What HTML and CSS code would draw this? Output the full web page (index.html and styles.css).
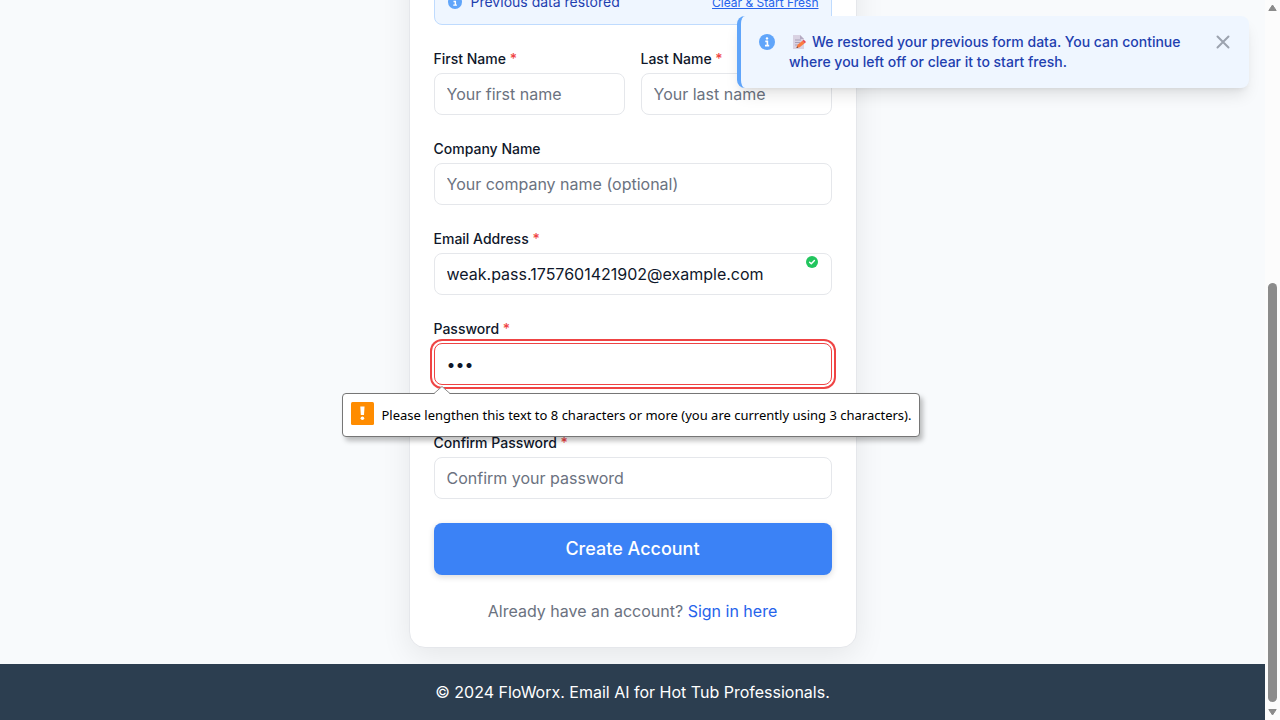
FILE: index.html
```html
<!DOCTYPE html>
<html lang="en">
<head>
<meta charset="utf-8">
<meta name="viewport" content="width=device-width, initial-scale=1">
<title>FloWorx - Create Account</title>
<link rel="stylesheet" href="styles.css">
</head>
<body>
<div class="window">
  <div class="page">
    <main class="main">
      <section class="card">
        <div class="banner">
          <svg class="banner-icon" viewBox="0 0 16 16" aria-hidden="true"><circle cx="8" cy="8" r="8" fill="#60a5fa"/><circle cx="8" cy="4.4" r="1.2" fill="#fff"/><path d="M6.3 7.4H8.4V11.4M6 11.6H10.2" fill="none" stroke="#fff" stroke-width="1.6"/></svg>
          <span class="banner-text">Previous data restored</span>
          <button type="button" class="banner-clear">Clear &amp; Start Fresh</button>
        </div>
        <form class="form" novalidate>
          <div class="name-row">
            <div class="field">
              <label class="label" for="first">First Name <span class="required">*</span></label>
              <input class="input" id="first" type="text" placeholder="Your first name">
            </div>
            <div class="field">
              <label class="label" for="last">Last Name <span class="required">*</span></label>
              <input class="input" id="last" type="text" placeholder="Your last name">
            </div>
          </div>
          <div class="field">
            <label class="label" for="company">Company Name</label>
            <input class="input" id="company" type="text" placeholder="Your company name (optional)">
          </div>
          <div class="field">
            <label class="label" for="email">Email Address <span class="required">*</span></label>
            <div class="control">
              <input class="input" id="email" type="email" value="weak.pass.1757601421902@example.com">
              <svg class="valid-icon" viewBox="0 0 20 20" aria-hidden="true"><circle cx="10" cy="10" r="10" fill="#22c55e"/><path d="M6 10.3L8.8 13L14 7.5" fill="none" stroke="#fff" stroke-width="2.4" stroke-linecap="round" stroke-linejoin="round"/></svg>
            </div>
          </div>
          <div class="field">
            <label class="label" for="password">Password <span class="required">*</span></label>
            <div class="control">
              <input class="input input-invalid" id="password" type="password" value="abc" minlength="8" aria-describedby="password-tip">
              <div class="tip" id="password-tip" role="alert">
                <svg class="tip-arrow" viewBox="0 0 16 8" aria-hidden="true"><path d="M0 8L8 0L16 8Z" fill="#fff"/><path d="M0 7.5L8 .5L16 7.5" fill="none" stroke="#8a8a8a"/></svg>
                <svg class="tip-icon" viewBox="0 0 23 23" aria-hidden="true"><rect width="23" height="23" rx="1.5" fill="#ff8c00"/><path d="M9.3 4.5H13.5L13 13H9.8Z" fill="#fff"/><circle cx="11.4" cy="16.3" r="1.8" fill="#fff"/></svg>
                <span>Please lengthen this text to 8 characters or more (you are currently using 3 characters).</span>
              </div>
            </div>
            <div class="field-note"></div>
          </div>
          <div class="field">
            <label class="label" for="confirm">Confirm Password <span class="required">*</span></label>
            <input class="input" id="confirm" type="password" placeholder="Confirm your password">
          </div>
          <button class="submit" type="submit">Create Account</button>
        </form>
        <p class="signin">Already have an account? <a class="signin-link" href="#">Sign in here</a></p>
      </section>
    </main>
    <footer class="footer">© 2024 FloWorx. Email AI for Hot Tub Professionals.</footer>
    <div class="toast" role="status">
      <svg class="toast-icon" viewBox="0 0 16 16" aria-hidden="true"><circle cx="8" cy="8" r="8" fill="#60a5fa"/><circle cx="8" cy="4.4" r="1.2" fill="#fff"/><path d="M6.3 7.4H8.4V11.4M6 11.6H10.2" fill="none" stroke="#fff" stroke-width="1.6"/></svg>
      <p class="toast-text"><svg class="memo" viewBox="0 0 14 14" aria-hidden="true"><path d="M1 0H8L12 4V14H1Z" fill="#d9d2e2"/><path d="M8 0L12 4H8Z" fill="#b4a9c1"/><path d="M3 5H9M3 7.5H8M3 10H6" stroke="#aaa0b8" stroke-width="1"/><path d="M4.5 13L5.5 9.8L10.5 5.8L12.7 8.2L7.7 12.2Z" fill="#fb7b3e"/><path d="M10.5 5.8L11.8 4.8L14 7.1L12.7 8.2Z" fill="#e8434f"/><path d="M4.5 13L5 11.3L6.3 12.5Z" fill="#5a3b35"/></svg>We restored your previous form data. You can continue where you left off or clear it to start fresh.</p>
      <button type="button" class="toast-close" aria-label="Close"><svg class="close-icon" viewBox="0 0 14 14" aria-hidden="true"><path d="M1.5 1.5L12.5 12.5M12.5 1.5L1.5 12.5" stroke="#9ca3af" stroke-width="2" stroke-linecap="round"/></svg></button>
    </div>
  </div>
  <div class="scrollbar" aria-hidden="true">
    <svg class="scroll-arrow" viewBox="0 0 9 8"><path d="M4.5 1L8.2 6.5H.8Z" fill="#8b8b8b" stroke="#8b8b8b" stroke-linejoin="round"/></svg>
    <div class="scroll-track"><div class="scroll-thumb"></div></div>
    <svg class="scroll-arrow" viewBox="0 0 9 8"><path d="M4.5 7L8.2 1.5H.8Z" fill="#8b8b8b" stroke="#8b8b8b" stroke-linejoin="round"/></svg>
  </div>
</div>
</body>
</html>
```
FILE: styles.css
```css
* { box-sizing: border-box; }

body {
  margin: 0;
  font-family: Inter, "Liberation Sans", sans-serif;
  font-size: 16px;
  line-height: 24px;
  color: #0f172a;
}

button, input { font: inherit; }
button { border: 0; padding: 0; background: none; cursor: pointer; }
svg { display: block; flex-shrink: 0; }

.window { display: flex; height: 100vh; overflow: hidden; }

/* The view rests at the end of the page, so content runs off the top. */
.page {
  position: relative;
  flex: 1;
  min-width: 0;
  display: flex;
  flex-direction: column;
  justify-content: flex-end;
  overflow: hidden;
  background: #f8fafc;
}

.main {
  flex-shrink: 0;
  display: flex;
  justify-content: center;
  padding: 16px;
}

.card {
  width: 100%;
  max-width: 448px;
  padding: 24px;
  border: 1px solid #e5e7eb;
  border-radius: 16px;
  background: #fff;
  box-shadow: 0 8px 30px rgba(0, 0, 0, 0.08);
}

.banner {
  display: flex;
  align-items: baseline;
  gap: 8px;
  margin-bottom: 24px;
  padding: 12px;
  border: 1px solid #bfdbfe;
  border-radius: 8px;
  background: #eff6ff;
  font-size: 14px;
  line-height: 20px;
  color: #1e40af;
}

.banner-icon { align-self: center; width: 16px; height: 14px; }
.banner-text { flex: 1; }
.banner-clear {
  font-size: 12px;
  line-height: 16px;
  color: #2563eb;
  text-decoration: underline;
}

.form { display: flex; flex-direction: column; gap: 24px; }
.name-row { display: grid; grid-template-columns: 1fr 1fr; gap: 16px; }
.field { display: flex; flex-direction: column; gap: 4px; min-width: 0; }
.field-note { height: 20px; }
.label { font-size: 14px; line-height: 20px; font-weight: 500; }
.required { color: #ef4444; }
.control { position: relative; }

.input {
  display: block;
  width: 100%;
  height: 42px;
  padding: 8px 12px;
  border: 1px solid #e5e7eb;
  border-radius: 8px;
  background: #fff;
  color: #0f172a;
  outline: none;
}

.input::placeholder { color: #6b7280; opacity: 1; }

.input-invalid {
  border-color: #ef4444;
  box-shadow: 0 0 0 2px #fff, 0 0 0 4px #ef4444;
}

.valid-icon { position: absolute; top: 3px; right: 14px; width: 12px; height: 12px; }

.tip {
  position: absolute;
  z-index: 2;
  top: 50px;
  left: -92px;
  display: flex;
  align-items: flex-start;
  gap: 8px;
  padding: 8px;
  border: 1px solid #767676;
  border-radius: 4px;
  background: #fff;
  box-shadow: 3px 4px 5px rgba(0, 0, 0, 0.25);
  font-family: "Noto Sans", "Open Sans", sans-serif;
  font-size: 13px;
  line-height: 26px;
  color: #000;
  white-space: nowrap;
}

.tip-arrow { position: absolute; top: -8px; left: 91px; width: 16px; height: 8px; }
.tip-icon { width: 23px; height: 23px; }

.submit {
  height: 52px;
  border-radius: 8px;
  background: #3b82f6;
  box-shadow: 0 2px 6px rgba(0, 0, 0, 0.15);
  font-size: 18px;
  font-weight: 500;
  color: #fff;
}

.signin { margin: 24px 0 0; text-align: center; color: #6b7280; }
.signin-link { color: #2563eb; text-decoration: none; }

.footer {
  flex-shrink: 0;
  padding: 16px;
  background: #2c3e50;
  color: #fff;
  text-align: center;
}

.toast {
  position: absolute;
  z-index: 3;
  top: 16px;
  right: 16px;
  display: flex;
  align-items: flex-start;
  width: 512px;
  max-width: calc(100% - 32px);
  padding: 16px;
  border-left: 4px solid #60a5fa;
  border-radius: 8px;
  background: #eff6ff;
  box-shadow: 0 10px 15px -3px rgba(0, 0, 0, 0.1), 0 4px 6px -4px rgba(0, 0, 0, 0.1);
  font-size: 14px;
  line-height: 20px;
  font-weight: 500;
  color: #1e40af;
}

.toast-icon { width: 16px; height: 16px; margin: 2px 14px 0 2px; }
.toast-text { flex: 1; margin: 0; }
.memo { display: inline-block; width: 14px; height: 14px; margin: 0 6px 0 3px; vertical-align: -2px; }
.toast-close { margin: 3px 3px 0 16px; }
.close-icon { width: 14px; height: 14px; }

.scrollbar {
  display: flex;
  flex-direction: column;
  align-items: center;
  flex: 0 0 15px;
  padding: 4px 0;
  background: #fcfcfc;
}

.scroll-arrow { width: 9px; height: 8px; }
.scroll-track { flex: 1; display: flex; flex-direction: column; justify-content: flex-end; padding: 6px 0; }
.scroll-thumb { width: 9px; height: 61.3%; border-radius: 5px; background: #8b8b8b; }
```
